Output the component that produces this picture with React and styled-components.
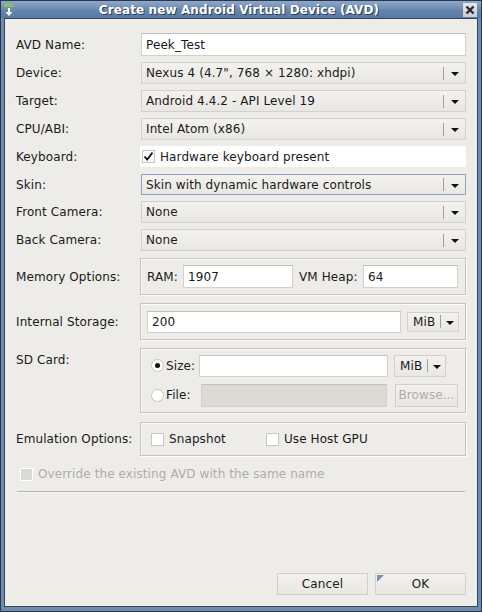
import React from "react";
import styled, { createGlobalStyle } from "styled-components";

const GlobalStyle = createGlobalStyle`
  html, body {
    margin: 0;
    padding: 0;
    background: #000;
  }
  * {
    box-sizing: border-box;
  }
`;

const Window = styled.div`
  width: 482px;
  height: 612px;
  display: flex;
  flex-direction: column;
  background: #6d8bb2;
  border: 1px solid #28374c;
  padding: 0 3px 4px 3px;
  font-family: "DejaVu Sans", "Liberation Sans", sans-serif;
  font-size: 12px;
  letter-spacing: 0.1px;
  color: #1a1a1a;
`;

const TitleBar = styled.div`
  height: 17px;
  margin: 0 -3px;
  padding: 0 4px 0 2px;
  display: flex;
  align-items: center;
  background: linear-gradient(#8ea8ca, #6383ab 60%, #577aa2);
`;

const TitleText = styled.div`
  flex: 1;
  text-align: center;
  color: #fff;
  font-weight: bold;
  font-size: 12px;
  text-shadow: 1px 1px 0 #2b3d55;
`;

const CloseBox = styled.div`
  width: 14px;
  height: 14px;
  background: linear-gradient(#e4e6e9, #c9ccd1);
  display: flex;
  align-items: center;
  justify-content: center;
`;

const Content = styled.div`
  flex: 1;
  display: flex;
  flex-direction: column;
  background: #edece8;
  border: 1px solid #34455c;
  padding: 14px 11px 11px 11px;
`;

const Form = styled.div`
  display: flex;
  flex-direction: column;
  gap: 6px;
`;

const Row = styled.div`
  display: grid;
  grid-template-columns: 125px 1fr;
  align-items: ${(p) => (p.$top ? "start" : "center")};
  height: ${(p) => p.$h || 22}px;
  margin-top: ${(p) => p.$mt || 0}px;
`;

const Label = styled.div`
  padding-top: ${(p) => p.$pt || 0}px;
  white-space: nowrap;
`;

const TextInput = styled.div`
  height: ${(p) => p.$h || 22}px;
  width: ${(p) => (p.$w ? p.$w + "px" : "auto")};
  flex: ${(p) => (p.$w ? "none" : 1)};
  background: ${(p) => (p.$disabled ? "#dcdad5" : "#fff")};
  border: 1px solid #d3d0c9;
  border-top-color: #c4c1b9;
  padding: 0 4px;
  display: flex;
  align-items: center;
`;

const ComboBox = styled.div`
  height: ${(p) => p.$h || 22}px;
  width: ${(p) => (p.$w ? p.$w + "px" : "auto")};
  flex: none;
  background: linear-gradient(#f3f2ef, #e9e7e3);
  border: 1px solid ${(p) => (p.$focus ? "#8ea3bf" : "#d4d1ca")};
  display: flex;
  align-items: center;
  padding-left: ${(p) => (p.$small ? 5 : 4)}px;
`;

const ComboText = styled.div`
  flex: ${(p) => (p.$small ? "none" : 1)};
  white-space: nowrap;
`;

const ComboSep = styled.div`
  width: 1px;
  height: 13px;
  background: #a3a09a;
  margin-left: ${(p) => (p.$small ? 5 : 0)}px;
`;

const ArrowBox = styled.div`
  width: ${(p) => (p.$small ? 17 : 21)}px;
  display: flex;
  justify-content: center;
  align-items: center;
  &::after {
    content: "";
    border-left: 4px solid transparent;
    border-right: 4px solid transparent;
    border-top: 4px solid #111;
    margin-top: 2px;
  }
`;

const CheckRow = styled.div`
  display: flex;
  align-items: center;
  gap: 5px;
  background: ${(p) => (p.$white ? "#fff" : "transparent")};
  height: 100%;
  padding-left: ${(p) => (p.$pl || 0)}px;
  margin-left: ${(p) => (p.$ml || 0)}px;
  color: ${(p) => (p.$disabled ? "#b0ada5" : "inherit")};
`;

const Box = styled.div`
  width: 13px;
  height: 13px;
  background: ${(p) => (p.$disabled ? "#dcdad5" : "#fff")};
  border: 1px solid ${(p) => (p.$disabled ? "#fff" : "#c9c6be")};
  display: flex;
  align-items: center;
  justify-content: center;
`;

const Radio = styled.div`
  width: 13px;
  height: 13px;
  flex: none;
  border-radius: 50%;
  background: #fff;
  border: 1px solid #c9c6be;
  display: flex;
  align-items: center;
  justify-content: center;
  &::after {
    content: "";
    display: ${(p) => (p.$on ? "block" : "none")};
    width: 5px;
    height: 5px;
    border-radius: 50%;
    background: #111;
  }
`;

const Group = styled.div`
  margin-left: -1px;
  height: ${(p) => p.$h}px;
  border: 1px solid #c6c3bb;
  box-shadow: inset 1px 1px 0 #fbfbfa, 1px 1px 0 #fbfbfa;
  padding: ${(p) => p.$pad || "0 6px"};
  display: flex;
  flex-direction: ${(p) => (p.$col ? "column" : "row")};
  justify-content: ${(p) => (p.$col ? "center" : "flex-start")};
  align-items: ${(p) => (p.$col ? "stretch" : "center")};
  gap: ${(p) => p.$gap || 0}px;
`;

const Line = styled.div`
  display: flex;
  align-items: center;
`;

const SmallLabel = styled.div`
  width: ${(p) => (p.$w ? p.$w + "px" : "auto")};
  flex: none;
  padding-left: ${(p) => p.$pl || 0}px;
  white-space: nowrap;
`;

const Gap = styled.div`
  width: ${(p) => p.$w}px;
  flex: none;
`;

const Button = styled.div`
  position: relative;
  width: ${(p) => p.$w || 91}px;
  height: ${(p) => p.$h || 22}px;
  flex: none;
  background: linear-gradient(#f2f1ee, #e9e7e3);
  border: 1px solid #d2cfc8;
  display: flex;
  align-items: center;
  justify-content: center;
  color: ${(p) => (p.$disabled ? "#b0ada5" : "inherit")};
`;

const DefaultMark = styled.div`
  position: absolute;
  top: 1px;
  left: 1px;
  width: 0;
  height: 0;
  border-top: 7px solid #7c8fb0;
  border-right: 7px solid transparent;
`;

const Separator = styled.div`
  height: 1px;
  background: #b4b1a8;
  box-shadow: 0 1px 0 #fafaf9;
  margin: 9px 1px 0 1px;
`;

const Spacer = styled.div`
  flex: 1;
`;

const Buttons = styled.div`
  display: flex;
  justify-content: flex-end;
  gap: 7px;
`;

function Combo({ text, focus, w, small, h }) {
  return (
    <ComboBox $focus={focus} $w={w} $small={small} $h={h}>
      <ComboText $small={small}>{text}</ComboText>
      <ComboSep $small={small} />
      <ArrowBox $small={small} />
    </ComboBox>
  );
}

const Check = () => (
  <svg width="11" height="11" viewBox="0 0 11 11">
    <path d="M1.5 5.5 L4.2 8.5 L9.5 1.5" fill="none" stroke="#111" strokeWidth="1.8" />
  </svg>
);

export default function App() {
  return (
    <>
      <GlobalStyle />
      <Window>
        <TitleBar>
          <svg width="12" height="14" viewBox="0 0 12 14">
            <path d="M1 4 A5 4 0 0 1 11 4 Z" fill="#8fc24a" />
            <rect x="5" y="5" width="2" height="5" fill="#fff" />
            <path d="M2.5 9 L9.5 9 L6 13 Z" fill="#fff" />
          </svg>
          <TitleText>Create new Android Virtual Device (AVD)</TitleText>
          <CloseBox>
            <svg width="10" height="10" viewBox="0 0 10 10">
              <path d="M1.5 1.5 L8.5 8.5 M8.5 1.5 L1.5 8.5" stroke="#2a2a2a" strokeWidth="2.4" />
            </svg>
          </CloseBox>
        </TitleBar>
        <Content>
          <Form>
            <Row $h={23}>
              <Label>AVD Name:</Label>
              <TextInput $h={23}>Peek_Test</TextInput>
            </Row>
            <Row>
              <Label>Device:</Label>
              <Combo text={"Nexus 4 (4.7\", 768 \u00d7 1280: xhdpi)"} />
            </Row>
            <Row>
              <Label>Target:</Label>
              <Combo text="Android 4.4.2 - API Level 19" />
            </Row>
            <Row>
              <Label>CPU/ABI:</Label>
              <Combo text="Intel Atom (x86)" />
            </Row>
            <Row $h={21}>
              <Label>Keyboard:</Label>
              <CheckRow $white $pl={2} $ml={-1}>
                <Box>
                  <Check />
                </Box>
                Hardware keyboard present
              </CheckRow>
            </Row>
            <Row $mt={1} $h={21}>
              <Label>Skin:</Label>
              <Combo text="Skin with dynamic hardware controls" focus h={21} />
            </Row>
            <Row>
              <Label>Front Camera:</Label>
              <Combo text="None" />
            </Row>
            <Row>
              <Label>Back Camera:</Label>
              <Combo text="None" />
            </Row>
            <Row $h={37} $mt={1}>
              <Label>Memory Options:</Label>
              <Group $h={37}>
                <SmallLabel $w={36}>RAM:</SmallLabel>
                <TextInput $w={110} $h={23}>1907</TextInput>
                <SmallLabel $w={70} $pl={6}>VM Heap:</SmallLabel>
                <TextInput $w={95} $h={23}>64</TextInput>
              </Group>
            </Row>
            <Row $h={37} $mt={2}>
              <Label>Internal Storage:</Label>
              <Group $h={37} $gap={6}>
                <TextInput $h={22}>200</TextInput>
                <Combo text="MiB" small w={52} h={20} />
              </Group>
            </Row>
            <Row $h={65} $mt={2} $top>
              <Label $pt={5}>SD Card:</Label>
              <Group $h={65} $col $gap={7} $pad="0 6px 0 10px">
                <Line>
                  <Radio $on />
                  <SmallLabel $w={35} $pl={2}>Size:</SmallLabel>
                  <TextInput $w={189} $h={22} />
                  <Gap $w={6} />
                  <Combo text="MiB" small w={52} h={22} />
                </Line>
                <Line>
                  <Radio />
                  <SmallLabel $w={37} $pl={2}>File:</SmallLabel>
                  <TextInput $w={186} $h={23} $disabled />
                  <Gap $w={8} />
                  <Button $disabled $w={63} $h={23}>Browse...</Button>
                </Line>
              </Group>
            </Row>
            <Row $h={34} $mt={3}>
              <Label>Emulation Options:</Label>
              <Group $h={34} $pad="0 10px">
                <CheckRow>
                  <Box />
                  Snapshot
                </CheckRow>
                <CheckRow $ml={40}>
                  <Box />
                  Use Host GPU
                </CheckRow>
              </Group>
            </Row>
            <Row $h={16} $mt={4} style={{ display: "flex" }}>
              <CheckRow $disabled $pl={4}>
                <Box $disabled />
                Override the existing AVD with the same name
              </CheckRow>
            </Row>
          </Form>
          <Separator />
          <Spacer />
          <Buttons>
            <Button>Cancel</Button>
            <Button>
              <DefaultMark />
              OK
            </Button>
          </Buttons>
        </Content>
      </Window>
    </>
  );
}
